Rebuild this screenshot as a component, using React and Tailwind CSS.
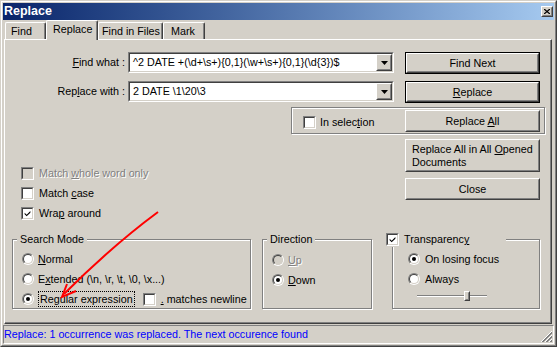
import React from 'react'

const font = "font-['Liberation_Sans',Arial,sans-serif]"

const Raised = ({ children, className = '', inner = 'justify-center' }) => (
  <div className={`border border-t-white border-l-white border-r-[#404040] border-b-[#404040] bg-[#d4d0c8] ${className}`}>
    <div className={`w-full h-full border border-t-[#d4d0c8] border-l-[#d4d0c8] border-r-[#808080] border-b-[#808080] flex items-center ${inner}`}>
      {children}
    </div>
  </div>
)

const Button = ({ children, isDefault, className = '', inner }) =>
  isDefault ? (
    <div className={`border border-black ${className}`}>
      <Raised className="w-full h-full" inner={inner}>{children}</Raised>
    </div>
  ) : (
    <Raised className={className} inner={inner}>{children}</Raised>
  )

const Sunken = ({ children, className = '', bg = 'bg-white' }) => (
  <div className={`border border-t-[#808080] border-l-[#808080] border-r-white border-b-white ${className}`}>
    <div className={`w-full h-full border border-t-[#404040] border-l-[#404040] border-r-[#d4d0c8] border-b-[#d4d0c8] ${bg} flex items-center`}>
      {children}
    </div>
  </div>
)

const Check = ({ checked, disabled }) => (
  <Sunken className="w-[13px] h-[13px] shrink-0" bg={disabled ? 'bg-[#d4d0c8]' : 'bg-white'}>
    {checked ? (
      <svg width="11" height="11" viewBox="0 0 11 11" className="block">
        <path d="M2 4.5 L4.5 7 L9 2.5 L9 4.5 L4.5 9 L2 6.5 Z" fill="#000" />
      </svg>
    ) : null}
  </Sunken>
)

const Radio = ({ checked, disabled }) => (
  <div className="w-[12px] h-[12px] shrink-0 rounded-full border border-t-[#808080] border-l-[#808080] border-r-white border-b-white">
    <div
      className={`w-full h-full rounded-full border border-t-[#404040] border-l-[#404040] border-r-[#d4d0c8] border-b-[#d4d0c8] ${disabled ? 'bg-[#d4d0c8]' : 'bg-white'} flex items-center justify-center`}
    >
      {checked ? <div className="w-[4px] h-[4px] rounded-full bg-black" /> : null}
    </div>
  </div>
)

const DropArrow = () => (
  <Raised className="w-[16px] h-[17px] shrink-0">
    <svg width="7" height="4" viewBox="0 0 7 4">
      <path d="M0 0 H7 L3.5 4 Z" fill="#000" />
    </svg>
  </Raised>
)

const Combo = ({ value }) => (
  <Sunken className="w-[266px] h-[21px] shrink-0">
    <span className="flex-1 pl-[3px] whitespace-nowrap overflow-hidden">{value}</span>
    <DropArrow />
  </Sunken>
)

const Group = ({ label, className = '', children }) => (
  <div className={`relative border border-[#808080] shadow-[inset_1px_1px_0_#fff,1px_1px_0_#fff] ${className}`}>
    {label}
    {children}
  </div>
)

const disabledText = 'text-[#808080] [text-shadow:1px_1px_0_#fff]'

const Tab = ({ label, active, className }) => (
  <div
    className={`border-t border-l border-r border-t-white border-l-white border-r-[#404040] shadow-[inset_-1px_0_0_#808080] rounded-t-[2px] bg-[#d4d0c8] pt-[2px] ${
      active ? 'h-[20px] -mb-[1px] relative z-10' : 'h-[17px]'
    } ${className}`}
  >
    {label}
  </div>
)

export default function App() {
  return (
    <div className={`relative w-[557px] h-[347px] bg-[#d4d0c8] text-[10.75px] leading-[13px] text-black ${font}`}>
      <div className="w-full h-full border border-t-[#d4d0c8] border-l-[#d4d0c8] border-r-[#404040] border-b-[#404040]">
        <div className="w-full h-full border border-t-white border-l-white border-r-[#808080] border-b-[#808080] p-[1px] flex flex-col">
          {/* title bar */}
          <div className="h-[17px] shrink-0 flex items-center bg-linear-to-r from-[#0a246a] to-[#a6caf0] pl-[1px] pr-[1px]">
            <span className="flex-1 text-white font-bold text-[12.5px]">Replace</span>
            <Raised className="w-[12px] h-[11px]">
              <svg width="6" height="5" viewBox="0 0 6 5">
                <path d="M0 0 L6 5 M6 0 L0 5" stroke="#000" strokeWidth="1.3" />
              </svg>
            </Raised>
          </div>

          {/* tabs */}
          <div className="h-[19px] shrink-0 flex items-end pl-[2px]">
            <Tab label="Find" className="w-[41px] pl-[5px]" />
            <Tab label="Replace" active className="w-[52px] pl-[6px]" />
            <Tab label="Find in Files" className="w-[65px] pl-[3px]" />
            <Tab label="Mark" className="w-[42px] pl-[7px]" />
          </div>

          {/* panel */}
          <div className="ml-[1px] w-[548px] h-[285px] shrink-0 border border-t-white border-l-white border-r-[#404040] border-b-[#404040] shadow-[inset_-1px_-1px_0_#808080] pt-[12px] flex flex-col">
            <div className="flex items-start h-[22px]">
              <div className="w-[120px] h-[21px] flex items-center justify-end">
                <span><u>F</u>ind what :</span>
              </div>
              <div className="ml-[3px]">
                <Combo value={'^2 DATE +(\\d+\\s+){0,1}(\\w+\\s+){0,1}(\\d{3})$'} />
              </div>
              <Button isDefault className="ml-[11px] w-[135px] h-[22px]">Find Next</Button>
            </div>

            <div className="flex items-start h-[22px] mt-[7px]">
              <div className="w-[120px] h-[21px] flex items-center justify-end">
                <span>Rep<u>l</u>ace with :</span>
              </div>
              <div className="ml-[3px]">
                <Combo value={'2 DATE \\1\\20\\3'} />
              </div>
              <Button isDefault className="ml-[11px] w-[135px] h-[22px]">
                <span><u>R</u>eplace</span>
              </Button>
            </div>

            <Group className="mt-[4px] ml-[286px] w-[254px] h-[27px] flex items-start pt-[2px]">
              <div className="w-[113px] flex items-center pl-[11px] mt-[6px]">
                <Check />
                <span className="ml-[4px]">In selec<u>t</u>ion</span>
              </div>
              <Button className="w-[135px] h-[22px]">
                <span>Replace <u>A</u>ll</span>
              </Button>
            </Group>

            <div className="flex mt-[5px]">
              <div className="w-[400px] pt-[28px] pl-[16px] flex flex-col gap-[7px]">
                <div className="flex items-center h-[13px]">
                  <Check disabled />
                  <span className={`ml-[5px] ${disabledText}`}>Match <u>w</u>hole word only</span>
                </div>
                <div className="flex items-center h-[13px]">
                  <Check />
                  <span className="ml-[5px]">Match <u>c</u>ase</span>
                </div>
                <div className="flex items-center h-[13px]">
                  <Check checked />
                  <span className="ml-[5px]">Wra<u>p</u> around</span>
                </div>
              </div>
              <div className="w-[135px] flex flex-col">
                <Button className="h-[33px]" inner="justify-start">
                  <span className="pl-[5px] leading-[13px]">
                    Replace All in All <u>O</u>pened
                    <br />
                    Documents
                  </span>
                </Button>
                <Button className="h-[22px] mt-[6px]">Close</Button>
              </div>
            </div>

            <div className="flex mt-[19px] h-[70px]">
              <Group
                className="ml-[7px] w-[239px] pl-[9px] pt-[11px] flex flex-col gap-[4px]"
                label={<span className="absolute -top-[8px] left-[4px] px-[3px] bg-[#d4d0c8] leading-[15px]">Search Mode</span>}
              >
                <div className="flex items-center h-[16px]">
                  <Radio />
                  <span className="ml-[4px]"><u>N</u>ormal</span>
                </div>
                <div className="flex items-center h-[16px]">
                  <Radio />
                  <span className="ml-[4px] whitespace-nowrap">E<u>x</u>tended (\n, \r, \t, \0, \x...)</span>
                </div>
                <div className="flex items-center h-[16px]">
                  <Radio checked />
                  <span className="ml-[4px] h-[16px] flex items-center border border-dotted border-black px-[1px]">
                    Re<u>g</u>ular expression
                  </span>
                  <div className="ml-[8px]">
                    <Check />
                  </div>
                  <span className="ml-[5px] whitespace-nowrap">
                    <u>.</u> matches newline
                  </span>
                </div>
              </Group>

              <Group
                className="ml-[11px] w-[110px] pl-[9px] pt-[12px] flex flex-col gap-[4px]"
                label={<span className="absolute -top-[8px] left-[4px] px-[3px] bg-[#d4d0c8] leading-[15px]">Direction</span>}
              >
                <div className="flex items-center h-[16px]">
                  <Radio disabled />
                  <span className={`ml-[4px] ${disabledText}`}><u>U</u>p</span>
                </div>
                <div className="flex items-center h-[16px]">
                  <Radio checked />
                  <span className="ml-[4px]"><u>D</u>own</span>
                </div>
              </Group>

              <Group
                className="ml-[20px] w-[148px] pl-[15px] pt-[11px] flex flex-col gap-[4px]"
                label={
                  <div className="absolute -top-[8px] -left-[7px] w-[120px] h-[15px] bg-[#d4d0c8] flex items-center">
                    <Check checked />
                    <span className="ml-[5px]">Transparenc<u>y</u></span>
                  </div>
                }
              >
                <div className="flex items-center h-[16px]">
                  <Radio checked />
                  <span className="ml-[5px]">On losing focus</span>
                </div>
                <div className="flex items-center h-[16px]">
                  <Radio />
                  <span className="ml-[5px]">Always</span>
                </div>
                <div className="relative h-[10px] ml-[9px] w-[70px] flex items-center">
                  <div className="w-full h-[2px] border-t border-t-[#808080] border-b border-b-white" />
                  <Raised className="absolute left-[47px] top-0 w-[6px] h-[10px]" />
                </div>
              </Group>
            </div>
          </div>

          {/* status bar */}
          <div className="relative mt-[1px] h-[19px] shrink-0 border border-t-[#808080] border-l-[#808080] border-r-white border-b-white flex items-center text-[#0000ff]">
            <span className="whitespace-nowrap">Replace: 1 occurrence was replaced. The next occurence found</span>
            <svg className="absolute right-0 bottom-0" width="13" height="13" viewBox="0 0 13 13">
              <path d="M12 1 L1 12 M12 5 L5 12 M12 9 L9 12" stroke="#fff" strokeWidth="1" />
              <path d="M12 2 L2 12 M12 3 L3 12 M12 6 L6 12 M12 7 L7 12 M12 10 L10 12 M12 11 L11 12" stroke="#808080" strokeWidth="1" />
            </svg>
          </div>
        </div>
      </div>

      {/* red annotation arrow */}
      <svg className="absolute left-0 top-0 pointer-events-none" width="557" height="347" viewBox="0 0 557 347">
        <path d="M158 212 Q 112 246 64 294" stroke="#ff0000" strokeWidth="2" fill="none" />
        <path d="M67 284 L62 297 L76 291" stroke="#ff0000" strokeWidth="2" fill="none" />
      </svg>
    </div>
  )
}
